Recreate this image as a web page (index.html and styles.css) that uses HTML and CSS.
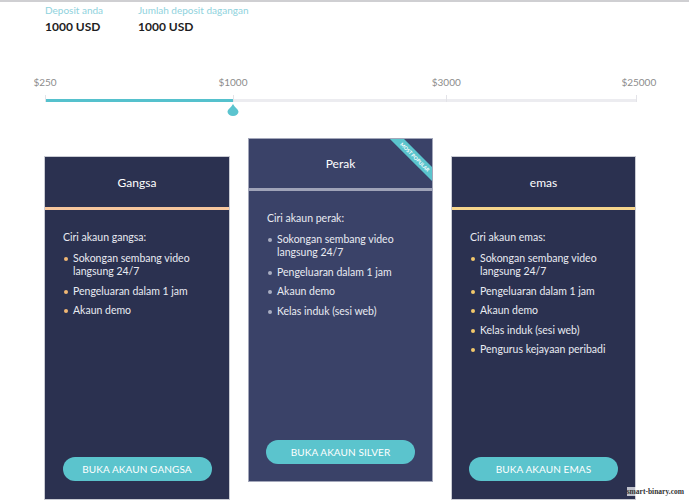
FILE: index.html
```html
<!DOCTYPE html>
<html>
<head>
<meta charset="utf-8">
<link rel="stylesheet" href="styles.css">
</head>
<body>
<div class="page">
  <div class="summary">
    <div class="stat stat-first">
      <div class="stat-label">Deposit anda</div>
      <div class="stat-value">1000 USD</div>
    </div>
    <div class="stat">
      <div class="stat-label">Jumlah deposit dagangan</div>
      <div class="stat-value">1000 USD</div>
    </div>
  </div>

  <div class="slider">
    <div class="track">
      <div class="fill" style="width:31.8%"></div>
      <span class="tick" style="left:0%"><span class="tick-label">$250</span></span>
      <span class="tick" style="left:31.8%"><span class="tick-label">$1000</span></span>
      <span class="tick" style="left:67.9%"><span class="tick-label">$3000</span></span>
      <span class="tick tick-end" style="left:100%"><span class="tick-label">$25000</span></span>
      <svg class="handle" style="left:31.8%" width="12" height="12" viewBox="0 0 12 12">
        <path d="M6 0 C7.5 3 11.5 5.5 11.5 7.8 A5.5 4.2 0 0 1 0.5 7.8 C0.5 5.5 4.5 3 6 0 Z" fill="#5bc4cf"/>
      </svg>
    </div>
  </div>

  <div class="cards">
    <div class="card card-bronze">
      <div class="card-head">Gangsa</div>
      <div class="card-body">
        <div class="card-intro">Ciri akaun gangsa:</div>
        <ul class="features">
          <li>Sokongan sembang video langsung 24/7</li>
          <li>Pengeluaran dalam 1 jam</li>
          <li>Akaun demo</li>
        </ul>
      </div>
      <button class="btn">BUKA AKAUN GANGSA</button>
    </div>

    <div class="card card-silver">
      <div class="ribbon"><span>MOST POPULAR</span></div>
      <div class="card-head">Perak</div>
      <div class="card-body">
        <div class="card-intro">Ciri akaun perak:</div>
        <ul class="features">
          <li>Sokongan sembang video langsung 24/7</li>
          <li>Pengeluaran dalam 1 jam</li>
          <li>Akaun demo</li>
          <li>Kelas induk (sesi web)</li>
        </ul>
      </div>
      <button class="btn">BUKA AKAUN SILVER</button>
    </div>

    <div class="card card-gold">
      <div class="card-head">emas</div>
      <div class="card-body">
        <div class="card-intro">Ciri akaun emas:</div>
        <ul class="features">
          <li>Sokongan sembang video langsung 24/7</li>
          <li>Pengeluaran dalam 1 jam</li>
          <li>Akaun demo</li>
          <li>Kelas induk (sesi web)</li>
          <li>Pengurus kejayaan peribadi</li>
        </ul>
      </div>
      <button class="btn">BUKA AKAUN EMAS</button>
    </div>
  </div>
  <div class="watermark">smart-binary.com</div>
</div>
</body>
</html>
```

FILE: styles.css
```css
* { box-sizing: border-box; }
html, body { margin: 0; padding: 0; background: #fff; }
body {
  font-family: Lato, "Open Sans", sans-serif;
  width: 689px;
  height: 500px;
  overflow: hidden;
}
.page {
  position: relative;
  border-top: 2px solid #cfcfd2;
  height: 500px;
}
.summary {
  display: flex;
  padding: 1px 0 0 45px;
}
.stat-first { width: 93px; }
.stat-label {
  font-size: 10px;
  color: #8fd2dd;
  line-height: 14px;
}
.stat-value {
  font-size: 12px;
  font-weight: 700;
  color: #1d1d22;
  margin-top: 3px;
  line-height: 14px;
}
.slider {
  padding: 0 53px 0 45px;
  margin-top: 65px;
}
.track {
  position: relative;
  height: 3px;
  background: #ececf0;
}
.fill {
  height: 3px;
  background: #55c1cd;
}
.tick {
  position: absolute;
  bottom: 0;
  width: 1px;
  height: 7px;
  background: #e3e3e8;
}
.tick-label {
  position: absolute;
  bottom: 14px;
  left: 0;
  transform: translateX(-50%);
  font-size: 10px;
  color: #8c8c8c;
  white-space: nowrap;
}
.tick-end .tick-label { transform: translateX(-42%); }
.handle {
  position: absolute;
  top: 5px;
  margin-left: -6px;
}
.cards {
  display: flex;
  gap: 18px;
  padding-left: 44px;
  margin-top: 36px;
  align-items: flex-start;
}
.card {
  position: relative;
  width: 185px;
  height: 344px;
  display: flex;
  flex-direction: column;
  background: #2b3150;
  border: 1px solid #c9cbd3;
  color: #e9ebf2;
  overflow: hidden;
}
.card-bronze { width: 186px; }
.card-bronze, .card-gold { margin-top: 18px; }
.card-silver {
  background: #3a4268;
  border-color: #a3a7ba;
}
.card-head {
  height: 53px;
  display: flex;
  align-items: center;
  justify-content: center;
  font-size: 12px;
  color: #fff;
  border-bottom: 3px solid #f7c79e;
}
.card-silver .card-head { border-bottom-color: #9fa3b8; height: 52px; }
.card-gold .card-head { border-bottom-color: #f6d58c; }
.card-body {
  flex: 1;
  padding: 20px 12px 0 18px;
}
.card-intro {
  font-size: 10.5px;
  line-height: 14px;
  margin-bottom: 8px;
}
.features {
  list-style: none;
  margin: 0;
  padding: 0;
}
.features li {
  position: relative;
  padding-left: 10px;
  font-size: 10.5px;
  line-height: 13px;
  margin-bottom: 6.5px;
}
.features li::before {
  content: "";
  position: absolute;
  left: 1px;
  top: 5px;
  width: 4px;
  height: 4px;
  border-radius: 50%;
  background: #f1b874;
}
.card-silver .features li::before { background: #a9aec2; }
.card-gold .features li::before { background: #f2c86b; }
.btn {
  align-self: center;
  width: 149px;
  height: 24px;
  margin: 0 0 18px 0;
  border: none;
  border-radius: 12px;
  background: #5bc4cd;
  color: #fff;
  font-family: inherit;
  font-size: 10px;
  letter-spacing: 0.1px;
}
.card-silver .btn { margin-bottom: 17px; }
.ribbon {
  position: absolute;
  top: 0;
  right: 0;
  width: 60px;
  height: 60px;
  overflow: hidden;
}
.ribbon span {
  position: absolute;
  top: 12.5px;
  left: 2.75px;
  width: 80px;
  height: 10px;
  transform: rotate(45deg);
  background: #5bc4cd;
  color: #fff;
  font-size: 5px;
  font-weight: 700;
  text-align: center;
  line-height: 10px;
}
.watermark {
  position: absolute;
  right: 5px;
  bottom: 4px;
  font-family: "Liberation Serif", serif;
  font-size: 7.5px;
  font-weight: 700;
  color: #333;
  background: rgba(255,255,255,0.7);
}
```
